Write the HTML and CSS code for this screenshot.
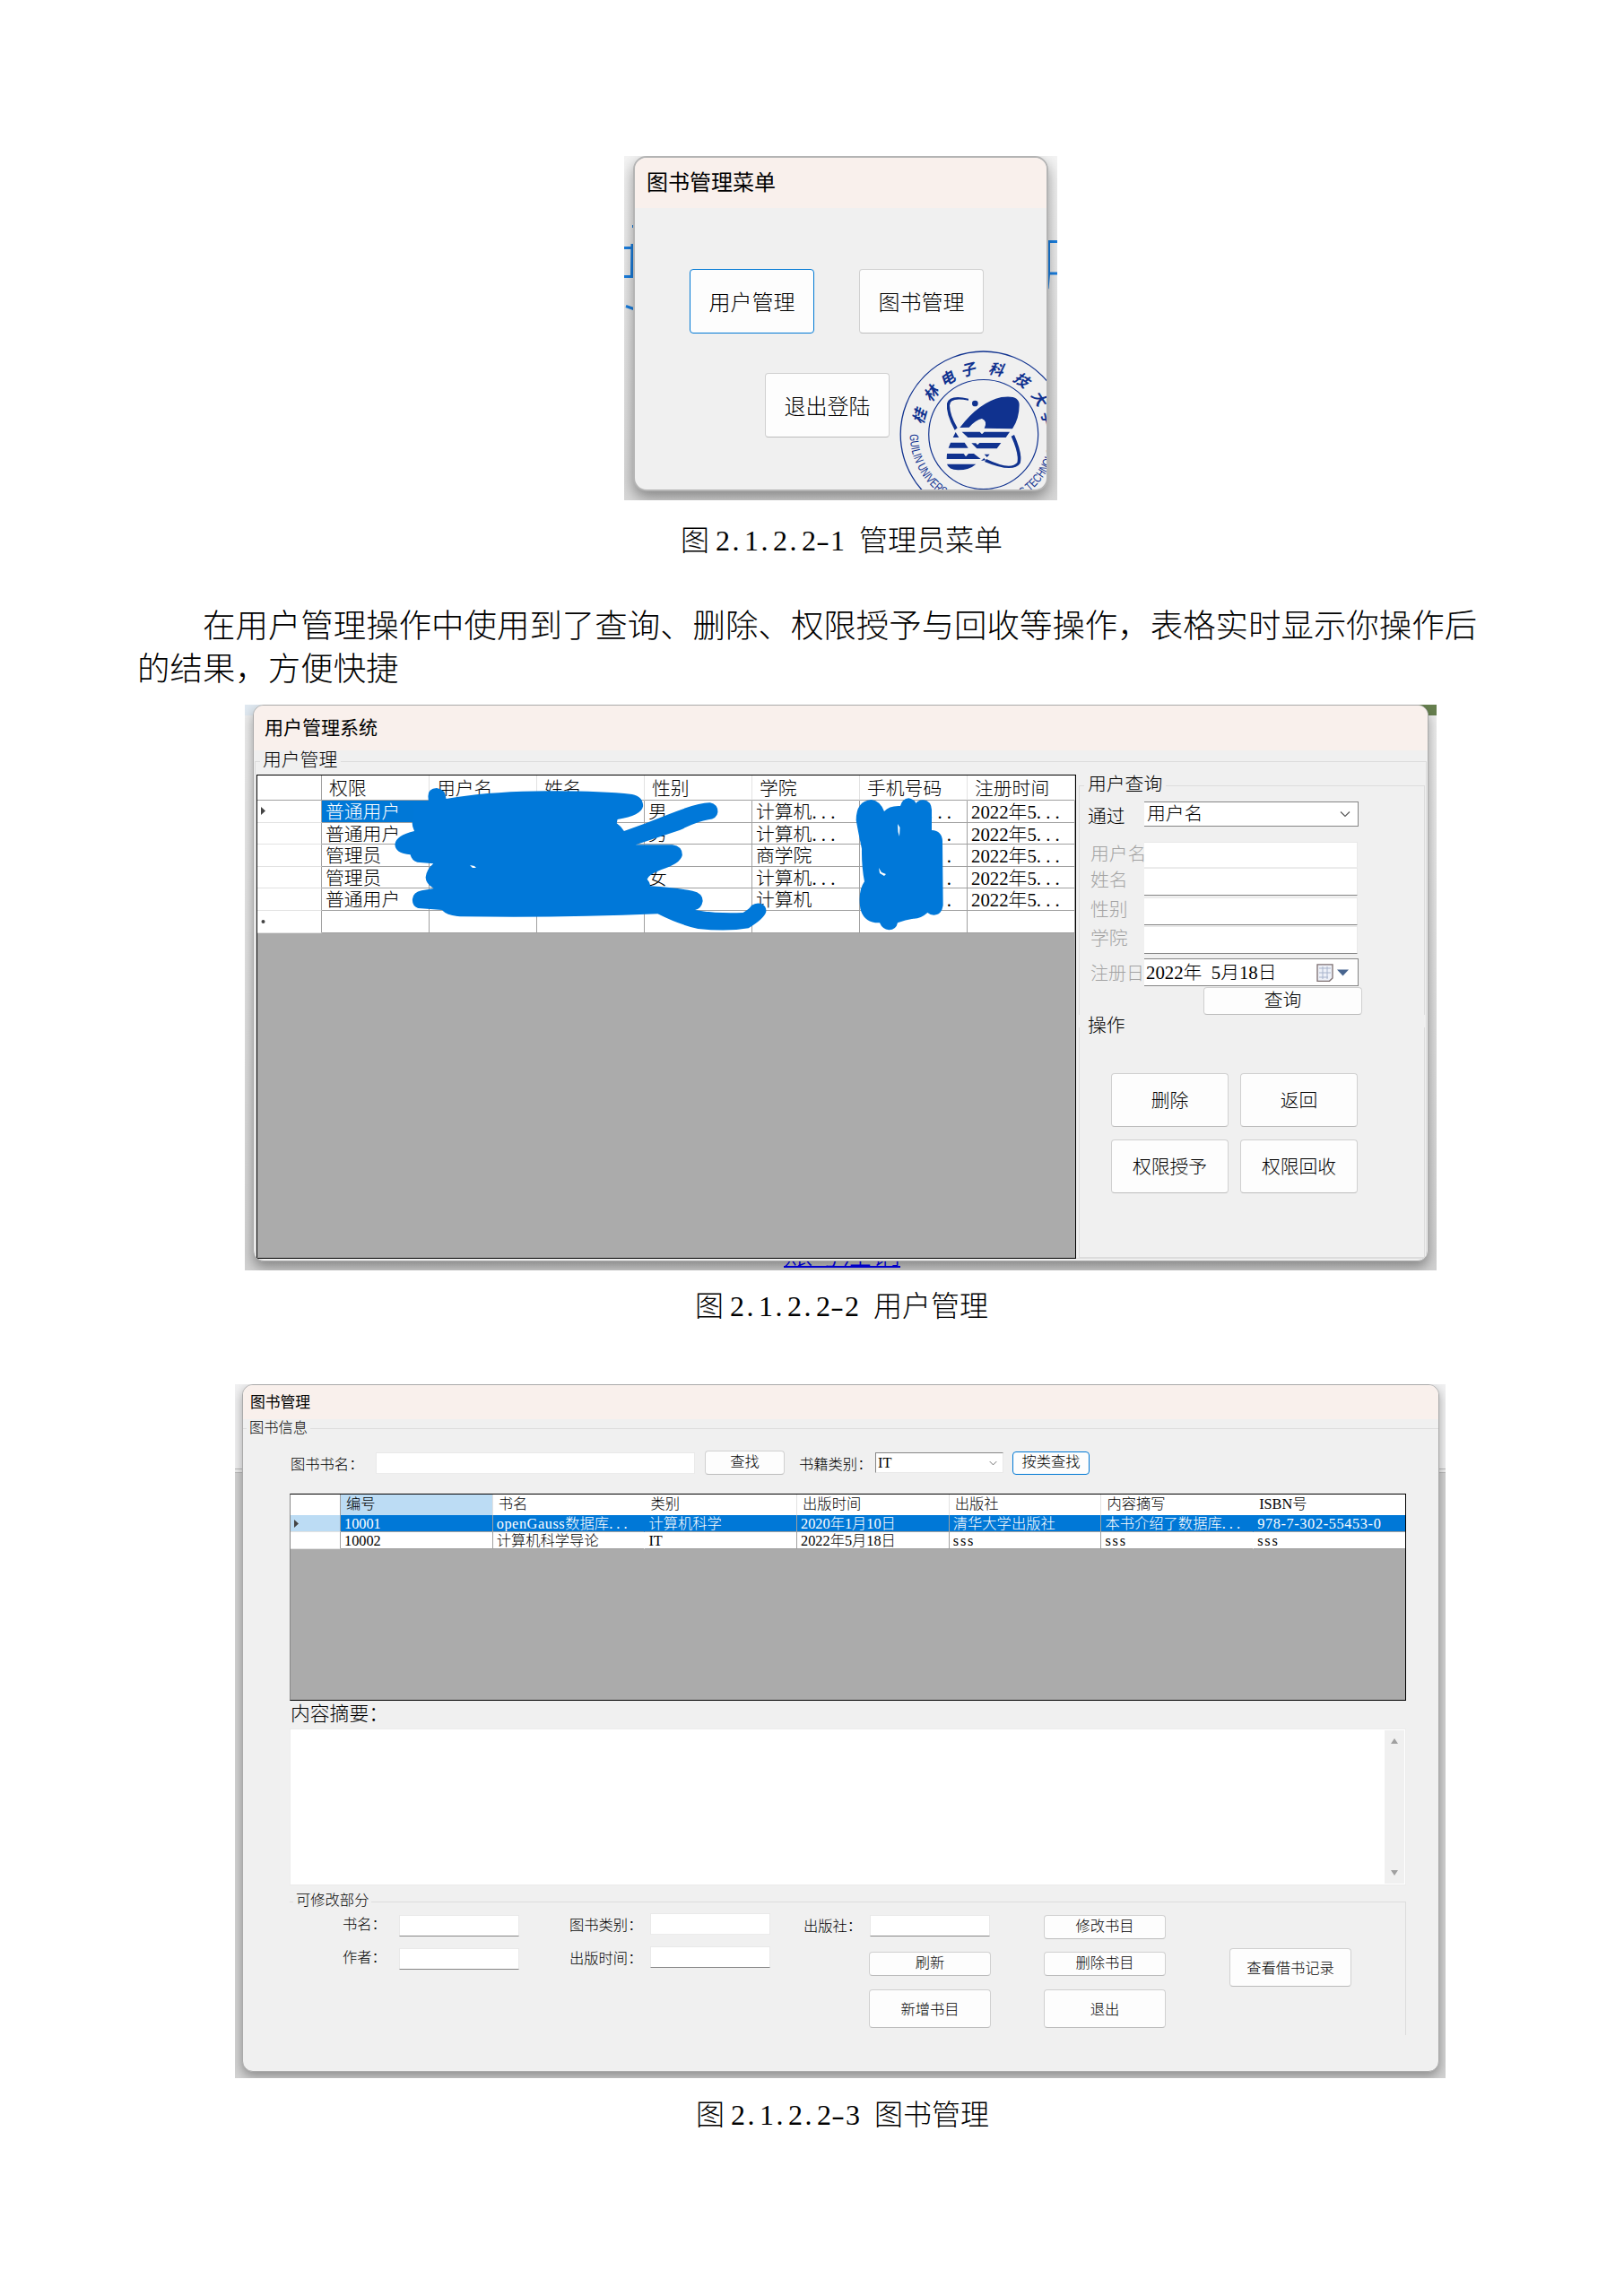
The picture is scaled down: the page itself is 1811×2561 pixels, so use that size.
FILE: index.html
```html
<!DOCTYPE html>
<html lang="zh-CN">
<head>
<meta charset="utf-8">
<title>图书管理系统 文档</title>
<link rel="stylesheet" href="styles.css">
</head>
<body>
<main class="page">

  <figure class="shot shot-menu">
    <svg class="backdrop-lines" viewBox="696 174 483 384" fill="none" stroke="#1a7fe0" stroke-width="3">
      <path d="M696 276.500H706M696 308.500H706M705 272L704.500 308M706.500 251V254M698 341.500L708 345"/>
      <path d="M1166 269.500H1180M1166 305H1180M1169.500 268V306L1168 322"/>
    </svg>
    <section class="window menu-window">
      <h2 class="title">图书管理菜单</h2>
      <div class="menu-row first"><button class="btn focus">用户管理</button><button class="btn">图书管理</button></div>
      <div class="menu-row second"><button class="btn">退出登陆</button></div>
      <svg class="seal" viewBox="980 370 188 177">
        <defs><path id="ring" d="M1014.700 484.500A82 82 0 0 0 1178.700 484.500"/></defs>
        <g fill="none" stroke="#10328f"><circle cx="1096.700" cy="484.500" r="92.500" stroke-width="1.300"/><circle cx="1096.700" cy="484.500" r="61" stroke-width="1.200"/></g>
        <g class="seal-cn" transform="translate(1096.700 484.500)">
          <text y="-68" transform="rotate(-74)">桂</text><text y="-68" transform="rotate(-52)">林</text>
          <text y="-68" transform="rotate(-33)">电</text><text y="-68" transform="rotate(-13.500)">子</text>
          <text y="-68" transform="rotate(11)">科</text><text y="-68" transform="rotate(35)">技</text>
          <text y="-68" transform="rotate(57)">大</text><text y="-68" transform="rotate(76)">学</text>
        </g>
        <text class="seal-en"><textPath href="#ring" textLength="255" lengthAdjust="spacingAndGlyphs">GUILIN UNIVERSITY OF ELECTRONIC TECHNOLOGY</textPath></text>
        <g fill="#10328f" transform="translate(980 370) scale(.33333)">
          <path d="M271 321Q335 236 410 219Q470 210 470 245Q470 290 447 325L353 323Q365 299 345 291Q325 294 302 320Z"/>
          <path d="M278 335H338L345 343L353 335H438L425 354H298Z"/>
          <path d="M257 336L268 354H248ZM240 371H287L299 389H233ZM310 373H325L330 379L337 372H409L395 391H328Z"/>
          <path d="M228 408H284L291 418L300 408H318L341 426H227ZM353 410H371L362 420ZM228 443H325Q303 463 265 463Q233 461 228 443ZM342 432L352 423L358 430Z"/>
          <path d="M300 230Q236 218 237 247Q238 280 263 322L254 329Q224 275 228 240Q236 209 300 224Z"/>
          <path d="M443 350L453 345Q482 410 473 440Q450 475 354 435L360 426Q440 465 463 438Q470 410 443 350Z"/>
          <circle cx="322" cy="240" r="10"/>
        </g>
      </svg>
    </section>
  </figure>
  <p class="caption">图<b class="thin"> </b>2<i>.</i>1<i>.</i>2<i>.</i>2<i class="dash">-</i>1<b> </b>管理员菜单</p>

  <p class="prose">在用户管理操作中使用到了查询、删除、权限授予与回收等操作，表格实时显示你操作后<br>的结果，方便快捷</p>

  <figure class="shot shot-users">
    <span class="behind-link">账号注销</span>
    <section class="window users-window">
      <h2 class="title">用户管理系统</h2>
      <div class="group users-group">
        <span class="legend">用户管理</span>
        <div class="split">
          <div class="grid user-grid">
            <div class="row head"><span></span><span>权限</span><span>用户名</span><span>姓名</span><span>性别</span><span>学院</span><span>手机号码</span><span>注册时间</span></div>
            <div class="row"><span class="mark"><svg viewBox="0 0 5 9"><path d="M0 0L5 4.500L0 9Z"/></svg></span><span class="sel">普通用户</span><span></span><span></span><span>男</span><span>计算机<em>...</em></span><span class="phone"><em>...</em></span><span>2022年5<em>...</em></span></div>
            <div class="row"><span></span><span>普通用户</span><span></span><span></span><span>男</span><span>计算机<em>...</em></span><span class="phone"><em>...</em></span><span>2022年5<em>...</em></span></div>
            <div class="row"><span></span><span>管理员</span><span></span><span></span><span></span><span>商学院</span><span class="phone"><em>...</em></span><span>2022年5<em>...</em></span></div>
            <div class="row"><span></span><span>管理员</span><span></span><span></span><span>女</span><span>计算机<em>...</em></span><span class="phone"><em>...</em></span><span>2022年5<em>...</em></span></div>
            <div class="row"><span></span><span>普通用户</span><span></span><span></span><span></span><span>计算机</span><span class="phone"><em>...</em></span><span>2022年5<em>...</em></span></div>
            <div class="row"><span class="mark"><svg viewBox="0 0 5 9"><circle cx="2.500" cy="5" r="2"/></svg></span><span></span><span></span><span></span><span></span><span></span><span></span><span></span></div>
            <svg class="scribble" viewBox="286 864 914 540" fill="#0078d9">
              <path transform="translate(260 780) scale(.40816 .33333)" d="M533 330Q530 298 556 297Q580 300 582 333Q700 308 860 307Q1000 306 1090 318Q1120 325 1120 358Q1115 390 1050 402L1048 415Q1060 425 1068 441Q1130 415 1190 385Q1270 345 1303 346Q1325 352 1324 378Q1322 400 1298 403Q1270 408 1220 438L1100 487H1200Q1228 492 1227 522Q1222 550 1170 570Q1135 587 1131 602Q1138 610 1140 625Q1210 630 1255 641Q1283 648 1283 675Q1280 700 1262 705Q1320 718 1393 714Q1412 700 1416 690Q1430 678 1445 685Q1458 695 1456 712Q1450 735 1408 766Q1350 778 1270 768Q1220 755 1160 718Q900 732 620 727Q580 722 571 705L505 699Q488 690 490 668Q492 645 515 640L548 633Q525 615 526 595Q528 570 547 550L503 545Q488 540 484 520Q442 515 442 485Q445 455 495 441Q485 415 492 400V348H534Z"/>
              <path transform="translate(800 780) scale(.33333)" d="M515 336Q545 340 558 375Q575 355 612 357Q618 333 640 331Q660 335 664 348Q675 335 690 337Q715 340 717 370V438Q752 440 753 475L755 690Q750 722 724 722Q712 722 703 714Q680 735 655 734Q630 738 603 748Q598 772 574 772Q552 770 543 748Q490 750 478 700Q470 640 492 610Q482 560 483 500Q472 450 464 405Q464 340 515 336Z"/>
              <path fill="#fff" d="M1001 919L1003.500 923L1003 933L1001.500 928ZM980 968L983 973L988 975L986 977L981 974ZM524 965L529 966L531 968H527Z"/>
            </svg>
          </div>
          <div class="side">
            <div class="group query-group">
              <span class="legend">用户查询</span>
              <div class="field by"><label>通过</label><span class="combo">用户名<svg viewBox="0 0 12 8"><path d="M1 1.500L6 6.500L11 1.500"/></svg></span></div>
              <div class="field off f1"><label>用户名</label><span class="input flat"></span></div>
              <div class="field off"><label>姓名</label><span class="input"></span></div>
              <div class="field off f3"><label>性别</label><span class="input"></span></div>
              <div class="field off f4"><label>学院</label><span class="input"></span></div>
              <div class="field off f5"><label>注册日</label><span class="combo date">2022年<b> </b>5月18日
                <svg class="cal" viewBox="0 0 36 20"><path d="M1 .8H18V16L14.500 19.300H1Z" fill="#eef1f8" stroke="#7d6f70" stroke-width="1.300"/><path d="M3 5H16M3 10H16M3 15H13M7 3V17M12 3V17" stroke="#a8b4cc" stroke-width="1" fill="none"/><path d="M23 6.500H36L29.500 13.500Z" fill="#48658f" stroke="none"/></svg></span></div>
              <button class="btn query">查询</button>
            </div>
            <div class="group ops-group">
              <span class="legend">操作</span>
              <div class="ops"><button class="btn">删除</button><button class="btn">返回</button><button class="btn">权限授予</button><button class="btn">权限回收</button></div>
            </div>
          </div>
        </div>
      </div>
    </section>
  </figure>
  <p class="caption second-cap">图<b class="thin"> </b>2<i>.</i>1<i>.</i>2<i>.</i>2<i class="dash">-</i>2<b> </b>用户管理</p>

  <figure class="shot shot-books">
    <section class="window books-window">
      <h2 class="title">图书管理</h2>
      <div class="group books-group">
        <span class="legend">图书信息</span>
        <div class="search">
          <label class="l1">图书书名：</label><span class="input wide flat"></span><button class="btn find">查找</button>
          <label class="l2">书籍类别：</label><span class="combo">IT<svg viewBox="0 0 12 8"><path d="M1 1.500L6 6.500L11 1.500"/></svg></span><button class="btn focus by-type">按类查找</button>
        </div>
        <div class="grid book-grid">
          <div class="row head"><span></span><span class="hot">编号</span><span>书名</span><span>类别</span><span>出版时间</span><span>出版社</span><span>内容摘写</span><span>ISBN号</span></div>
          <div class="row picked"><span class="mark hot"><svg viewBox="0 0 5 9"><path d="M0 0L5 4.500L0 9Z"/></svg></span><span>10001</span><span><u>openGauss</u>数据库<em>...</em></span><span>计算机科学</span><span>2020年1月10日</span><span>清华大学出版社</span><span>本书介绍了数据库<em>...</em></span><span class="isbn">978-7-302-55453-0</span></div>
          <div class="row"><span></span><span>10002</span><span>计算机科学导论</span><span>IT</span><span>2022年5月18日</span><span class="sss">sss</span><span class="sss">sss</span><span class="sss">sss</span></div>
        </div>
        <div class="abstract-label">内容摘要：</div>
        <div class="abstract"><div class="scroll"><svg viewBox="0 0 8 6"><path d="M4 0L8 6H0Z"/></svg><svg viewBox="0 0 8 6"><path d="M0 0H8L4 6Z"/></svg></div></div>
        <div class="group edit-group">
          <span class="legend">可修改部分</span>
          <div class="edit">
            <div class="col c1"><div><label>书名：</label><span class="input"></span></div><div><label>作者：</label><span class="input"></span></div></div>
            <div class="col c2"><div><label>图书类别：</label><span class="input flat"></span></div><div><label>出版时间：</label><span class="input"></span></div></div>
            <div class="col c3"><div><label>出版社：</label><span class="input"></span></div><button class="btn short">刷新</button><button class="btn tall">新增书目</button></div>
            <div class="col c4"><button class="btn short">修改书目</button><button class="btn short">删除书目</button><button class="btn tall">退出</button></div>
            <div class="col c5"><button class="btn tall">查看借书记录</button></div>
          </div>
        </div>
      </div>
    </section>
  </figure>
  <p class="caption third-cap">图<b class="thin"> </b>2<i>.</i>1<i>.</i>2<i>.</i>2<i class="dash">-</i>3<b> </b>图书管理</p>
</main>
</body>
</html>
```
FILE: styles.css
```css
* { box-sizing: border-box; }
body {
  margin: 0;
  background: #fff;
  color: #000;
  font-family: "Liberation Serif", "Noto Sans CJK SC", serif;
  font-weight: 300;
}
.page { width: 1811px; height: 2561px; padding-top: 174px; overflow: hidden; }
figure, p, h2 { margin: 0; }
i, b, em, u { font-style: normal; font-weight: inherit; text-decoration: none; }
em { letter-spacing: .25em; }
b { display: inline-block; width: .5em; }
u { letter-spacing: .035em; }

/* Document text */
.caption { height: 48px; margin-top: 21px; padding-left: 759px; font-size: 32px; line-height: 49px; white-space: nowrap; }
.caption i { display: inline-block; width: .5em; padding-left: .08em; }
.caption .dash { padding-left: 0; transform: scaleX(1.4); transform-origin: left; }
.caption .thin { width: .22em; }
.second-cap { margin-top: 16px; padding-left: 775px; }
.third-cap { margin-top: 17px; padding-left: 776px; }
.prose { position: relative; top: 1px; margin: 47px 0 16px 153px; font-size: 36.45px; line-height: 48px; text-indent: 73px; white-space: nowrap; }

/* Windows and controls */
.shot { position: relative; overflow: hidden; }
.window { position: relative; overflow: hidden; background: #f0f0f0; border: 1px solid #aaa; }
.title { background: #f9f0ec; font-family: "Noto Sans CJK SC", sans-serif; font-weight: 400; }
.btn {
  display: block; padding: 0 0 2px; border: 1px solid #d0d0d0; border-bottom-color: #bcbcbc; border-radius: 4px;
  background: #fdfdfd; color: #000; font: inherit; text-align: center; white-space: nowrap;
}
.btn.focus { border-color: #0078d4; }
.input { display: block; background: #fff; border: 1px solid #e9e9e9; border-bottom-color: #868686; }
.input.flat { border-bottom-color: #ececec; }
.combo { display: flex; align-items: center; background: #fff; border: 1px solid #868686; white-space: nowrap; }
.combo svg { width: 12px; height: 8px; margin-left: auto; fill: none; stroke: #555; stroke-width: 1.1; }
.group { border: 0 solid #dcdcdc; border-top-width: 1px; }
.legend { display: block; width: fit-content; background: #f0f0f0; white-space: nowrap; }
.grid { background: #ababab; border: 1px solid #000; overflow: hidden; }
.row { display: grid; }
.row span { background: #fff; border: 0 solid #a0a0a0; border-width: 0 1px 1px 0; white-space: nowrap; overflow: hidden; }
.row span:first-child { border-bottom-color: #e2e2e2; }
.row.head span { border-right-color: #e2e2e2; }
.row.head span:first-child { border-right-color: #a0a0a0; border-bottom-color: #a0a0a0; }
.mark { display: flex; align-items: center; }
.mark svg { width: 5px; height: 9px; fill: #444; }

/* Menu window */
.shot-menu { width: 483px; height: 384px; margin-left: 696px; background: linear-gradient(#f3f3f3, #d8d8d8); }
.backdrop-lines { position: absolute; inset: 0; width: 483px; height: 384px; }
.menu-window { width: 463px; height: 374px; margin-left: 10px; border-width: 2px; border-color: #b4b4b4; border-radius: 15px; font-size: 24px; box-shadow: 0 7px 16px rgba(0,0,0,.38); }
.menu-window .title { height: 56px; padding-left: 13px; font-size: 24px; line-height: 52px; }
.menu-row { display: flex; gap: 50px; }
.menu-row .btn { width: 139px; height: 72px; }
.menu-row.first { margin: 68px 0 0 61px; }
.menu-row.second { margin: 44px 0 0 145px; }
.seal { position: absolute; left: 272px; top: 194px; width: 188px; height: 177px; }
.seal-cn { fill: #10328f; font: italic 700 16.5px "Noto Sans CJK SC", sans-serif; text-anchor: middle; }
.seal-en { fill: #10328f; font: 13.5px "Liberation Sans Narrow", "Liberation Sans", sans-serif; }

/* User window */
.shot-users { width: 1329px; height: 631px; margin-left: 273px; background: linear-gradient(90deg, #dfe8f0 0 10px, #888f7c 800px, #67804f) 0 0 / 100% 12px no-repeat, linear-gradient(#eee, #d2d2d2); }
.behind-link { position: absolute; left: 601px; top: 598px; color: #00f; font-size: 32.5px; line-height: 30px; text-decoration: underline; text-decoration-thickness: 2px; text-underline-offset: 2px; }
.users-window { width: 1311px; height: 621px; margin-left: 9px; border-radius: 12px; font-size: 20.8px; box-shadow: 0 7px 14px rgba(0,0,0,.35); }
.users-window .title { height: 50px; padding-left: 12px; font-size: 21px; line-height: 46px; }
.users-group { margin: 12px 1px 0 1px; height: 555px; border-width: 1px; }
.users-group > .legend { height: 24px; margin: -13px 0 3px 5px; padding: 0 4px 0 3px; line-height: 22px; }
.split { display: flex; padding-left: 1px; }
.user-grid { position: relative; width: 914px; height: 540px; flex: none; }
.user-grid .row { grid-template-columns: 72px repeat(7, 120px); height: 24.6px; }
.user-grid .row span { padding-left: 4px; line-height: 25px; }
.user-grid .row.head { height: 28px; }
.user-grid .row.head span { padding-left: 8px; line-height: 29px; }
.user-grid .row .sel { background: #0078d7; color: #fff; }
.user-grid .row .phone { padding-left: 76px; }
.scribble { position: absolute; left: -1px; top: -1px; width: 914px; height: 540px; }
.side { width: 386px; margin-left: 3px; }
.side .legend { height: 24px; margin-left: 5px; padding: 0 4px; line-height: 22px; }
.query-group { height: 256px; margin-top: 12px; border-width: 1px 1px 0; }
.query-group .legend { margin-top: -13px; }
.field { display: grid; grid-template-columns: 63px 239px; height: 31px; padding-left: 9px; line-height: 28px; }
.field label { overflow: hidden; white-space: nowrap; }
.field.by { height: 28px; margin: 6px 0 17px; }
.field.by label { line-height: 33px; }
.field .combo { padding: 0 8px 0 3px; border-left: 0; line-height: 24px; }
.field.off label { padding-left: 3px; color: #a3a3a3; }
.field .input { width: 238px; border-left: 0; }
.field.f1 { height: 29px; }
.field.f3 { margin-top: 2px; }
.field.f4 { margin-top: 1px; }
.field.f5 { margin-top: 5px; }
.field.f5 label { font-size: 20px; line-height: 35px; }
.field .date { padding-left: 2px; }
.combo .cal { width: 36px; height: 20px; margin-right: 2px; }
.query { width: 177px; height: 31px; margin: 1px 0 0 138px; line-height: 27px; }
.ops-group { height: 257px; margin-top: 14px; border-width: 0 1px 1px; }
.ops-group .legend { position: relative; top: -13px; }
.ops { display: grid; grid-template: 60px 60px / 131px 131px; gap: 14px 13px; margin: 27px 0 0 35px; }

/* Book window */
.shot-books { width: 1350px; height: 774px; margin: 61px 0 0 262px; background: linear-gradient(#f0f0f1 0 94px, #bbb 94px 95px, #ececec 95px 98px, #bbb 98px 99px, #d2d2d2 99px); }
.second-cap + .shot-books { margin-top: 63px; }
.books-window { width: 1335px; height: 767px; margin-left: 8px; border-radius: 12px; font-size: 16.3px; box-shadow: 0 5px 12px rgba(0,0,0,.32); }
.books-window .title { height: 38px; padding-left: 8px; font-size: 16.8px; line-height: 36px; }
.books-group { margin-top: 10px; }
.books-group > .legend { height: 20px; margin: -11px 0 15px 4px; padding: 0 3px; line-height: 19px; }
.search { display: flex; align-items: center; height: 27px; padding-left: 53px; }
.search .l1 { width: 95px; }
.search .wide { width: 356px; height: 24px; }
.search .find { width: 89px; height: 27px; margin: 0 16px 0 11px; line-height: 23px; }
.search .l2 { width: 85px; }
.search .combo { width: 143px; height: 23px; margin-right: 10px; padding: 0 6px 0 2px; border-right-color: #e9e9e9; border-bottom-color: #e9e9e9; }
.search .combo svg { width: 9px; height: 6px; }
.search .by-type { width: 86px; height: 26px; line-height: 22px; }
.book-grid { width: 1245px; height: 231px; margin: 21px 0 0 52px; border-left-color: #888; }
.book-grid .row { grid-template-columns: 56px repeat(7, 169.7px); height: 19px; }
.book-grid .row span { padding-left: 4px; line-height: 19px; }
.book-grid .row.head { height: 23px; }
.book-grid .row.head span { padding-left: 6px; border-bottom: 0; line-height: 22px; }
.book-grid .row .hot, .book-grid .row.head .hot { background: #bcdcf4; }
.book-grid .row.picked span:not(.mark) { background: #0078d7; color: #fff; }
.book-grid .row span:nth-child(3), .book-grid .row span:nth-child(7) { border-right-color: transparent; }
.isbn { letter-spacing: .039em; }
.sss { letter-spacing: .11em; }
.abstract-label { height: 31px; padding-left: 53px; font-size: 21.8px; line-height: 31px; }
.abstract { display: flex; justify-content: flex-end; width: 1245px; height: 175px; margin-left: 52px; padding: 1px; background: #fff; border: 1px solid #ececec; }
.scroll { display: flex; flex-direction: column; justify-content: space-between; align-items: center; width: 22px; padding: 9px 0; background: #f0f0f0; }
.scroll svg { width: 8px; height: 6px; fill: #a0a0a0; }
.edit-group { width: 1245px; height: 149px; margin: 18px 0 0 52px; border-right-width: 1px; }
.edit-group .legend { height: 20px; margin: -12px 0 0 4px; padding: 0 3px; line-height: 20px; }
.edit { display: flex; align-items: flex-start; }
.col { flex: none; }
.col > div { display: flex; align-items: center; height: 24px; margin-bottom: 13px; }
.col .input { width: 134px; height: 24px; }
.col .btn { width: 136px; }
.col .short { height: 27px; margin-bottom: 14px; line-height: 23px; }
.col .tall { height: 43px; }
.c1 { margin: 6px 0 0 59px; }
.c1 label { width: 63px; line-height: 22px; padding-bottom: 2px; }
.c2 { margin: 4px 0 0 56px; }
.c2 label { width: 90px; }
.c3 { margin: 6px 0 0 37px; }
.c3 label { width: 74px; padding-bottom: 2px; }
.c3 > div { margin-bottom: 17px; }
.c3 .btn { margin-left: 73px; }
.c3 .short { margin-bottom: 15px; }
.c4 { margin: 6px 0 0 59px; }
.c4 .tall { margin-top: 15px; }
.c5 { margin: 43px 0 0 71px; }
```
